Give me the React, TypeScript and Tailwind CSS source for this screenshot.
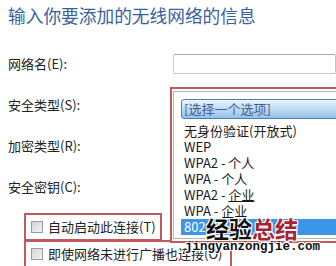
const options = [
  { label: "无身份验证(开放式)" },
  { label: "WEP" },
  { label: "WPA2 - 个人" },
  { label: "WPA - 个人" },
  { label: "WPA2 - 企业", underline: true },
  { label: "WPA - 企业" },
  { label: "802.1X", active: true },
];

function CheckBox() {
  return (
    <span className="w-[12px] h-[12px] border border-[#9a9a9a] bg-gradient-to-br from-[#d4d4d4] to-[#f4f4f4] shrink-0" />
  );
}

export default function App() {
  return (
    <div className="relative w-[336px] h-[266px] overflow-hidden bg-white text-[#222] font-['Noto_Sans_CJK_SC','Noto_Sans',sans-serif]">
      {/* heading */}
      <div className="pl-2 pt-[5px] text-[17.7px] leading-[20px] text-[#3a5f9c]">
        输入你要添加的无线网络的信息
      </div>

      {/* form rows */}
      <div className="flex flex-col text-[13px]">
        <div className="mt-[29px] h-[20px] flex items-center">
          <span className="w-[181px] pl-2">网络名(E):</span>
          <div className="w-[170px] h-[20px] border border-[#c6c6c6] border-t-[#a8a8a8] rounded-[2px] bg-white" />
        </div>
        <div className="mt-[21px] h-[20px] flex items-center pl-2">安全类型(S):</div>
        <div className="mt-[21px] h-[20px] flex items-center pl-2">加密类型(R):</div>
        <div className="mt-[21px] h-[20px] flex items-center pl-2">安全密钥(C):</div>

        <div className="mt-[16px] ml-[24px] flex flex-col">
          <div className="w-[138px] h-[28px] border-2 border-[#c25a5c] flex items-center gap-[5px] pl-[5px]">
            <CheckBox />
            <span>自动启动此连接(T)</span>
          </div>
          <div className="w-[208px] h-[28px] border-2 border-[#c25a5c] flex items-center gap-[5px] pl-[5px] -mt-[1px]">
            <CheckBox />
            <span>即使网络未进行广播也连接(O)</span>
          </div>
        </div>
      </div>

      {/* open drop-down */}
      <div className="absolute left-[170px] top-[87px] w-[180px] h-[156px] border-2 border-[#c25a5c] bg-white pl-[1px] pt-[2px] pb-[2px]">
        <div className="h-full border border-[#b4b4b4] bg-white pl-[7px] pt-[7px]">
          <div className="h-[20px] rounded-[3px] border border-[#4f7db4] bg-gradient-to-b from-[#eaf4fd] to-[#93c1e8] flex items-center pl-[2px] text-[13px] text-[#3e5f8e]">
            [选择一个选项]
          </div>
          <div className="mt-[4px] flex flex-col text-[13px] leading-[16px]">
            {options.map((o) => (
              <div
                key={o.label}
                className={
                  o.active
                    ? "h-[16px] pl-[3px] bg-[#3d95e8] text-white"
                    : "h-[16px] pl-[3px] text-[#1a1a1a]"
                }
              >
                {o.underline ? (
                  <>
                    WPA2 - <span className="underline">企业</span>
                  </>
                ) : (
                  o.label
                )}
              </div>
            ))}
          </div>
        </div>
      </div>

      {/* watermark */}
      <div className="absolute left-[206px] top-[215px] text-[23px] leading-[26px] font-bold [text-shadow:1px_1px_0_#fff,-1px_-1px_0_#fff,1px_-1px_0_#fff,-1px_1px_0_#fff]">
        <span className="text-[#111]">经验</span>
        <span className="text-[#a8232b]">总结</span>
      </div>
      <div className="absolute left-[185px] top-[240px] text-[12.5px] leading-[15px] font-bold text-[#111] font-['Liberation_Mono',monospace] [text-shadow:1px_1px_0_#fff,-1px_-1px_0_#fff,1px_-1px_0_#fff,-1px_1px_0_#fff]">
        jingyanzongjie.com
      </div>
    </div>
  );
}
